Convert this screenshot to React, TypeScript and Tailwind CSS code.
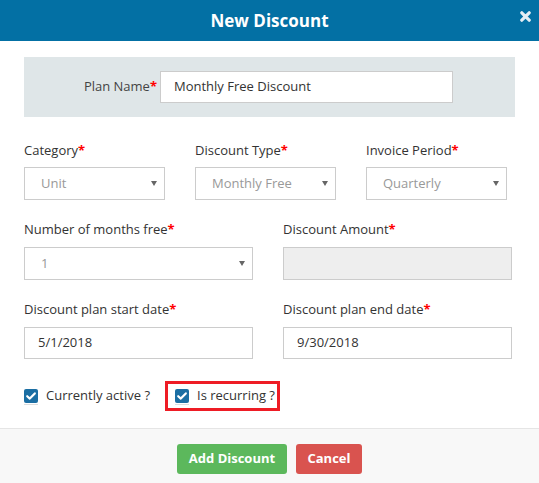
import React from "react";

const FONT = { fontFamily: '"Open Sans", "Liberation Sans", sans-serif' };

function Req({ children }: { children: React.ReactNode }) {
  return (
    <label className="block h-[18px] text-[13px] leading-[18px] text-[#333]">
      {children}
      <span className="font-bold text-[#f00]">*</span>
    </label>
  );
}

function SelectBox({ value, className = "" }: { value: string; className?: string }) {
  return (
    <div
      className={`flex h-[33px] items-center justify-between border border-[#ccc] bg-white pl-[16px] pr-[7px] text-[13px] text-[#999] ${className}`}
    >
      <span>{value}</span>
      <svg width="6" height="5" viewBox="0 0 6 5">
        <path d="M0 0 L6 0 L3 5 Z" fill="#666" />
      </svg>
    </div>
  );
}

function TextBox({ value }: { value: string }) {
  return (
    <div className="flex h-[32px] items-center border border-[#ccc] bg-white pl-[13px] text-[13px] text-[#333]">
      {value}
    </div>
  );
}

function Check() {
  return (
    <span className="relative inline-block h-[14px] w-[14px]">
      <svg width="14" height="14" viewBox="0 0 14 14" className="block">
        <rect x="0" y="0" width="14" height="14" rx="2" fill="#1b6ea3" />
        <path d="M3.2 7.2 L5.8 9.6 L10.8 4.4" stroke="#fff" strokeWidth="2.2" fill="none" strokeLinecap="round" strokeLinejoin="round" />
      </svg>
      <span className="absolute left-0 top-[15px] h-px w-[14px] bg-[#ddd]" />
    </span>
  );
}

export default function App() {
  return (
    <div className="h-[483px] w-[539px] overflow-hidden bg-white" style={FONT}>
      {/* header */}
      <div className="relative flex h-[41px] items-center justify-center bg-[#0370a4]">
        <h1 className="text-[17px] font-bold text-white">New Discount</h1>
        <svg className="absolute right-[8px] top-[11px]" width="11" height="11" viewBox="0 0 11 11">
          <path d="M1.8 1.8 L9.2 9.2 M9.2 1.8 L1.8 9.2" stroke="#e6eef4" strokeWidth="3.2" strokeLinecap="round" />
        </svg>
      </div>

      <div className="px-[24px] pt-[16px]">
        {/* plan name panel */}
        <div className="flex h-[60px] items-center bg-[#dfe6e8]">
          <div className="w-[136px] pr-[3px] text-right text-[13px] text-[#444]">
            Plan Name<span className="font-bold text-[#f00]">*</span>
          </div>
          <div className="flex h-[32px] w-[293px] items-center border border-[#ccc] bg-white pl-[13px] text-[13px] text-[#333]">
            Monthly Free Discount
          </div>
        </div>

        {/* category row */}
        <div className="mt-[24px] grid grid-cols-[141px_141px_141px] gap-x-[30px]">
          <div>
            <Req>Category</Req>
            <SelectBox value="Unit" className="mt-[8px]" />
          </div>
          <div>
            <Req>Discount Type</Req>
            <SelectBox value="Monthly Free" className="mt-[8px]" />
          </div>
          <div>
            <Req>Invoice Period</Req>
            <SelectBox value="Quarterly" className="mt-[8px]" />
          </div>
        </div>

        {/* months / amount */}
        <div className="mt-[20px] grid grid-cols-[229px_229px] gap-x-[30px]">
          <div>
            <Req>Number of months free</Req>
            <SelectBox value="1" className="mt-[9px]" />
          </div>
          <div>
            <Req>Discount Amount</Req>
            <div className="mt-[9px] h-[33px] border border-[#ccc] bg-[#eee]" />
          </div>
        </div>

        {/* dates */}
        <div className="mt-[20px] grid grid-cols-[229px_229px] gap-x-[30px]">
          <div>
            <Req>Discount plan start date</Req>
            <div className="mt-[9px]">
              <TextBox value="5/1/2018" />
            </div>
          </div>
          <div>
            <Req>Discount plan end date</Req>
            <div className="mt-[9px]">
              <TextBox value="9/30/2018" />
            </div>
          </div>
        </div>

        {/* checkboxes */}
        <div className="mt-[22px] flex h-[30px] items-center">
          <div className="flex items-center gap-[8px]">
            <Check />
            <span className="text-[13px] text-[#333]">Currently active ?</span>
          </div>
          <div className="ml-[15px] flex h-[30px] w-[115px] items-center gap-[8px] border-[3px] border-[#ee1c25] pl-[7px]">
            <Check />
            <span className="text-[13px] text-[#333]">Is recurring ?</span>
          </div>
        </div>
      </div>

      {/* footer */}
      <div className="mt-[17px] flex h-[56px] items-start justify-center gap-[9px] border-t border-[#e5e5e5] bg-[#f8f8f8] pt-[15px]">
        <button className="h-[30px] w-[110px] rounded-[3px] bg-[#5cb85c] text-[13px] font-bold text-white">
          Add Discount
        </button>
        <button className="h-[30px] w-[66px] rounded-[3px] bg-[#d9534f] text-[13px] font-bold text-white">
          Cancel
        </button>
      </div>
    </div>
  );
}
